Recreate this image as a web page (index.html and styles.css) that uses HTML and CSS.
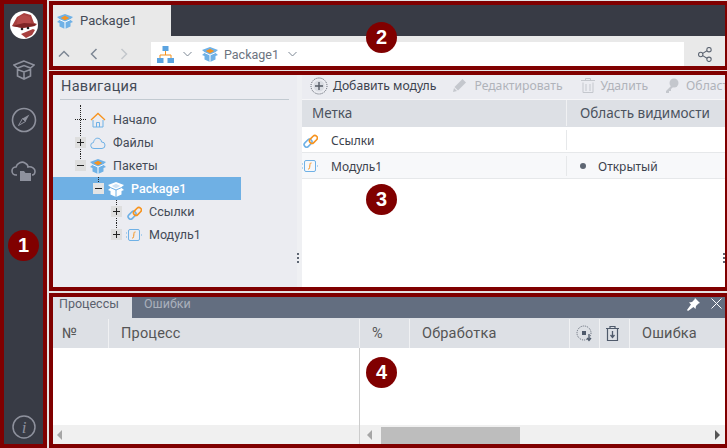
FILE: index.html

```html
<!DOCTYPE html>
<html lang="ru">
<head>
  <meta charset="UTF-8">
  <title>Package1</title>
  <link rel="stylesheet" href="styles.css">
</head>
<body>

  <svg class="defs" width="0" height="0">
    <symbol id="pkg" viewBox="0 0 16 16">
      <path d="M8 1 0 4l3 2.500L0 9l2.500 1v3.500L8 16l5.500-2.500V10L16 9l-3-2.500L16 4z" fill="#6fb1e6"/>
      <path d="M8 2.800 3.800 5 8 7.200 12.200 5z" fill="#f7931e"/>
      <path d="M8 9 2.500 6.600M8 9l5.500-2.400M8 9v7" stroke="#fff" fill="none"/>
    </symbol>
    <symbol id="pkgw" viewBox="0 0 16 16">
      <path d="M8 1 0 4l3 2.500L0 9l2.500 1v3.500L8 16l5.500-2.500V10L16 9l-3-2.500L16 4z" fill="#fff"/>
      <path d="M8 2.800 3.800 5 8 7.200 12.200 5z" fill="#cfe3f5"/>
      <path d="M8 9 2.500 6.600M8 9l5.500-2.400M8 9v7" stroke="#6fb1e6" fill="none"/>
    </symbol>
    <symbol id="lnk" viewBox="0 0 16 16">
      <rect x="-6.500" y="5.500" width="9" height="5" rx="2.500" transform="rotate(-45 5 8) translate(5.500 3)" fill="none" stroke="#6fb1e6" stroke-width="1.600"/>
      <rect x="5.500" y="5.500" width="9" height="5" rx="2.500" transform="rotate(-45 10 6)" fill="none" stroke="#f7931e" stroke-width="1.600"/>
    </symbol>
    <symbol id="mod" viewBox="0 0 16 16">
      <rect x="2.500" y="2.500" width="11" height="11" rx="1.500" fill="none" stroke="#6fb1e6"/>
      <path d="M9.500 5c-1.500-.5-1.500 1-1.700 3s-.3 3.500-1.800 3" fill="none" stroke="#f7931e"/>
      <path d="M0 6h1M0 10h1M15 8h1" stroke="#6fb1e6"/>
    </symbol>
  </svg>

  <!-- 1 -->
  <aside class="frame sidebar">
    <svg class="avatar" width="28" height="28" viewBox="0 0 28 28">
      <circle cx="14" cy="14" r="14" fill="#fff"/>
      <path d="M2 15 7 6l7-4 7 2 3 8 3 1-2 2-12 2z" fill="#a8403f"/>
      <path d="M8 6l6-2 6 2 1 6-14 1z" fill="#b54a49"/>
      <path d="M2 15l12-3 12 1-2 2-12 2z" fill="#7e2525"/>
      <path d="M11 23l12-5 2 1-3 5-6 3z" fill="#a8403f"/>
      <circle cx="12" cy="18" r="1.300" fill="#222"/>
      <circle cx="18" cy="17" r="1.300" fill="#222"/>
    </svg>
    <svg class="side-icon" width="22" height="22" viewBox="0 0 22 22" fill="none" stroke="#8e919d" stroke-width="1.600">
      <path d="M11 2 1 6l3.500 3L11 6.500 17.500 9 21 6z"/>
      <path d="M4.500 10v7l6.500 3 6.500-3v-7M4.500 10.500 11 13l6.500-2.500M11 13v7"/>
    </svg>
    <svg class="side-icon" width="26" height="26" viewBox="0 0 26 26" fill="none" stroke="#8e919d" stroke-width="1.600">
      <circle cx="13" cy="13" r="11.500"/>
      <path d="M18.500 7.500 14.500 14.500 11.500 11.500z" fill="#8e919d" stroke="none"/>
      <path d="M7.500 18.500 11.500 11.500 14.500 14.500z" stroke-width="1"/>
    </svg>
    <svg class="side-icon" width="26" height="24" viewBox="0 0 26 22" fill="none" stroke="#8e919d" stroke-width="1.600">
      <path d="M6 15H5a4 4 0 0 1 0-8c1-4 6-6 9-4 2 1 3 2 3 4 4-1 7 2 7 4s-1 4-3 4"/>
      <path d="M9 11h4l1.500 2H20v8H9z" fill="#8e919d" stroke="none"/>
    </svg>
    <svg class="side-info" width="24" height="24" viewBox="0 0 24 24">
      <circle cx="12" cy="12" r="11" fill="none" stroke="#8e919d" stroke-width="1.500"/>
      <text x="12" y="17.500" text-anchor="middle" class="info-i">i</text>
    </svg>
  </aside>

  <div class="main">

    <!-- 2 -->
    <header class="frame top">
      <div class="tabbar">
        <div class="doc-tab">
          <svg width="16" height="16"><use href="#pkg"/></svg>
          <span>Package1</span>
        </div>
      </div>
      <div class="navbar">
        <div class="nav-btns">
          <svg width="12" height="12" viewBox="0 0 12 12" fill="none" stroke="#7d8794" stroke-width="1.500"><path d="M1 8.500 6 3.500l5 5"/></svg>
          <svg width="12" height="12" viewBox="0 0 12 12" fill="none" stroke="#7d8794" stroke-width="1.500"><path d="M8.500 1 3.500 6l5 5"/></svg>
          <svg width="12" height="12" viewBox="0 0 12 12" fill="none" stroke="#c3c7cc" stroke-width="1.500"><path d="M3.500 1l5 5-5 5"/></svg>
        </div>
        <div class="crumbs">
          <svg width="17" height="17" viewBox="0 0 17 17">
            <rect x="5.500" y="0" width="6" height="5" fill="#5ba3e0"/>
            <rect x="0" y="12" width="6.500" height="5" fill="#5ba3e0"/>
            <rect x="10.500" y="12" width="6.500" height="5" fill="#5ba3e0"/>
            <path d="M8.500 5v4M3 12V9h11v3" fill="none" stroke="#f7931e"/>
          </svg>
          <svg class="chev" width="9" height="6" viewBox="0 0 9 6" fill="none" stroke="#7d8794"><path d="M.5 1l4 4 4-4"/></svg>
          <svg class="crumb-pkg" width="16" height="16"><use href="#pkg"/></svg>
          <span class="crumb-text">Package1</span>
          <svg class="chev" width="9" height="6" viewBox="0 0 9 6" fill="none" stroke="#7d8794"><path d="M.5 1l4 4 4-4"/></svg>
        </div>
        <div class="share">
          <svg width="14" height="15" viewBox="0 0 14 15" fill="none" stroke="#5e6673" stroke-width="1.100">
            <circle cx="2.700" cy="7.500" r="2.200"/><circle cx="11" cy="2.700" r="2.200"/><circle cx="11" cy="12.300" r="2.200"/>
            <path d="M4.700 6.400 9 3.800M4.700 8.600 9 11.200"/>
          </svg>
        </div>
      </div>
    </header>

    <!-- 3 -->
    <section class="frame middle">
      <div class="navpane">
        <h3 class="nav-title">Навигация</h3>
        <div class="tree">
          <div class="node lvl0 line-up-first">
            <span class="exp none"></span>
            <svg class="ticon" width="16" height="16" viewBox="0 0 16 16" fill="none">
              <path d="M1 8l7-6.500L15 8" stroke="#f7931e" stroke-width="1.300"/>
              <path d="M3 8v7h10V8M6.500 15v-4.500h3V15" stroke="#6fb1e6"/>
            </svg>
            <span>Начало</span>
          </div>
          <div class="node lvl0">
            <span class="exp plus"></span>
            <svg class="ticon" width="16" height="16" viewBox="0 0 16 16" fill="none" stroke="#6fb1e6">
              <path d="M4 13.500a3 3 0 0 1-.5-6C4 4 6.500 2.500 9 3.500c1.500.5 2.500 2 2.500 3.500a3.200 3.200 0 0 1 .5 6.500z"/>
            </svg>
            <span>Файлы</span>
          </div>
          <div class="node lvl0 last">
            <span class="exp"></span>
            <svg class="ticon" width="16" height="16"><use href="#pkg"/></svg>
            <span>Пакеты</span>
          </div>
          <div class="node lvl1 selected">
            <span class="exp"></span>
            <svg class="ticon" width="16" height="16"><use href="#pkgw"/></svg>
            <span class="sel-text">Package1</span>
          </div>
          <div class="node lvl2">
            <span class="exp plus"></span>
            <svg class="ticon" width="16" height="16"><use href="#lnk"/></svg>
            <span>Ссылки</span>
          </div>
          <div class="node lvl2 last">
            <span class="exp plus"></span>
            <svg class="ticon" width="16" height="16"><use href="#mod"/></svg>
            <span>Модуль1</span>
          </div>
        </div>
      </div>
      <div class="splitter"><i></i></div>
      <div class="content">
        <div class="toolbar">
          <svg class="tool-add" width="18" height="18" viewBox="0 0 18 18" fill="none">
            <circle cx="9" cy="9" r="8" stroke="#555b66" stroke-dasharray="1 1"/>
            <circle cx="9" cy="9" r="5.500" fill="#d9dce2"/>
            <path d="M9 5v8M5 9h8" stroke="#555b66" stroke-width="1.400"/>
          </svg>
          <span class="tool active">Добавить модуль</span>
          <svg class="tool-edit" width="15" height="15" viewBox="0 0 15 15"><path d="M10.500 1 14 4.500 6 12.500 2.500 9zM2 10l3 3-4 1z" fill="#c4c7cd"/></svg>
          <span class="tool">Редактировать</span>
          <svg class="tool-del" width="14" height="15" viewBox="0 0 14 15" fill="none" stroke="#c4c7cd"><path d="M0 2.500h14M4.500 2.500V.5h5v2M2 4.500v10h10v-10M5 6v7M9 6v7"/></svg>
          <span class="tool">Удалить</span>
          <svg class="tool-key" width="14" height="15" viewBox="0 0 14 15"><circle cx="9" cy="5" r="4.500" fill="#c4c7cd"/><path d="M7 7 1 13v2h3v-2h2v-2l3-3z" fill="#c4c7cd"/></svg>
          <span class="tool">Область</span>
        </div>
        <div class="grid-head">
          <div class="cell c-label">Метка</div>
          <div class="cell c-scope">Область видимости</div>
        </div>
        <div class="row">
          <svg class="row-icon" width="16" height="16"><use href="#lnk"/></svg>
          <div class="cell c-label">Ссылки</div>
          <div class="cell c-scope"></div>
        </div>
        <div class="row alt">
          <svg class="row-icon" width="16" height="16"><use href="#mod"/></svg>
          <div class="cell c-label">Модуль1</div>
          <div class="cell c-scope"><span class="dot"></span>Открытый</div>
        </div>
        <div class="splitter-r"></div>
      </div>
    </section>

    <!-- 4 -->
    <section class="frame bottom">
      <div class="ptabs">
        <span class="ptab on">Процессы</span>
        <span class="ptab">Ошибки</span>
        <div class="ptab-tools">
          <svg width="13" height="13" viewBox="0 0 13 13" fill="#fff"><path d="M8 0l5 5-1.500.5L9 8l-.5 3-2-2L1 13 0 12l4-5.500-2-2L5 4l2.500-2.500z"/></svg>
          <svg width="11" height="11" viewBox="0 0 11 11" stroke="#fff" fill="none"><path d="M.5.5l10 10M10.500.5l-10 10"/></svg>
        </div>
      </div>
      <div class="phead">
        <div class="ph w-no">№</div>
        <div class="ph w-proc">Процесс</div>
        <div class="ph w-pct">%</div>
        <div class="ph w-work">Обработка</div>
        <div class="ph w-ico">
          <svg width="17" height="17" viewBox="0 0 17 17" fill="none">
            <circle cx="8" cy="8" r="7" stroke="#5e6673" stroke-dasharray="1 1"/>
            <rect x="6" y="6" width="4" height="4" fill="#4f5a6b"/>
            <path d="M13 9v6M11 13l2 2.500 2-2.500" stroke="#4f5a6b" stroke-width="1.300"/>
          </svg>
        </div>
        <div class="ph w-ico">
          <svg width="13" height="15" viewBox="0 0 13 15" fill="none" stroke="#4f5a6b">
            <path d="M0 2.500h13M4 2.500V.5h5v2M1.500 2.500v12h10v-12" stroke-width="1.200"/>
            <path d="M6.500 5v6M4.500 9l2 2.500 2-2.500" stroke-width="1.300"/>
          </svg>
        </div>
        <div class="ph w-err">Ошибка</div>
      </div>
      <div class="pbody">
        <div class="pcol-left"></div>
        <div class="pcol-right"></div>
      </div>
      <div class="pscroll">
        <div class="sb-left"><span class="arr-l"></span></div>
        <div class="sb-right">
          <span class="arr-l"></span>
          <div class="thumb"></div>
          <span class="arr-r"></span>
        </div>
      </div>
    </section>
  </div>

  <span class="badge b1">1</span>
  <span class="badge b2">2</span>
  <span class="badge b3">3</span>
  <span class="badge b4">4</span>

</body>
</html>
```

FILE: styles.css

```css
html, body {
  margin: 0;
  padding: 0;
}
body {
  width: 727px;
  height: 448px;
  overflow: hidden;
  background-color: #e4e4e4;
  font-family: Roboto, sans-serif;
  display: flex;
  position: relative;
}
svg {
  display: block;
  flex: none;
}
.defs {
  position: absolute;
}
.frame {
  border: 4px solid #800000;
  box-sizing: border-box;
}

/* 1 */
.sidebar {
  width: 47px;
  margin-right: 2px;
  background-color: #383b45;
  display: flex;
  flex-direction: column;
  align-items: center;
  padding-top: 7px;
}
.avatar {
  margin-bottom: 20px;
}
.side-icon {
  margin-bottom: 26px;
}
.side-info {
  margin-top: auto;
  margin-bottom: 5px;
}
.info-i {
  font-family: "Liberation Serif", serif;
  font-style: italic;
  font-size: 17px;
  fill: #8e919d;
}

.main {
  width: 678px;
  flex: none;
  display: flex;
  flex-direction: column;
  padding-top: 1px;
}

/* 2 */
.top {
  height: 69px;
  margin-right: -1px;
  margin-bottom: 1px;
  border-right-width: 3px;
  background-color: #e9e9e9;
}
.tabbar {
  height: 31px;
  background-color: #383b45;
}
.doc-tab {
  width: 118px;
  height: 31px;
  background-color: #e9e9e9;
  display: flex;
  align-items: center;
  padding-left: 4px;
  box-sizing: border-box;
  font-size: 13px;
  color: #444b57;
}
.doc-tab span {
  margin-left: 7px;
}
.navbar {
  height: 30px;
  display: flex;
}
.nav-btns {
  width: 98px;
  display: flex;
  align-items: center;
  gap: 18px;
  padding: 6px 0 0 5px;
  box-sizing: border-box;
}
.crumbs {
  flex: 1;
  margin-top: 6px;
  background-color: #fff;
  display: flex;
  align-items: center;
  padding-left: 6px;
  font-size: 12.500px;
  color: #6c7480;
}
.chev {
  margin-left: 9px;
}
.crumb-pkg {
  margin-left: 10px;
}
.crumb-text {
  margin-left: 6px;
}
.share {
  width: 41px;
  padding-top: 6px;
  display: flex;
  align-items: center;
  justify-content: center;
}

/* 3 */
.middle {
  height: 220px;
  margin-right: -1px;
  margin-bottom: 2px;
  border-right-width: 3px;
  display: flex;
  background-color: #fff;
}
.navpane {
  width: 244px;
  background-color: #ebecf1;
  padding-top: 3px;
  box-sizing: border-box;
}
.nav-title {
  margin: 0 8px 0 7px;
  padding: 0 0 4px 1px;
  height: 17px;
  font-size: 14.500px;
  line-height: 17px;
  font-weight: normal;
  letter-spacing: .3px;
  color: #444b57;
  border-bottom: 1px solid #c2cad1;
}
.tree {
  margin-top: 8px;
  width: 188px;
}
.node {
  height: 23px;
  display: flex;
  align-items: center;
  position: relative;
  font-size: 12.500px;
  color: #444b57;
}
.lvl0 { padding-left: 22px; }
.lvl1 { padding-left: 40px; }
.lvl2 { padding-left: 58px; }
.node::before {
  content: "";
  position: absolute;
  top: 0;
  bottom: 0;
  border-left: 1px dotted #222;
}
.lvl0::before { left: 27px; }
.lvl1::before { left: 45px; bottom: 18px; }
.lvl2::before { left: 63px; }
.last::before { bottom: 12px; }
.line-up-first::before { top: -3px; }
.exp {
  width: 11px;
  height: 11px;
  background: linear-gradient(#222, #222) center / 7px 1px no-repeat, #dedede;
  position: relative;
  z-index: 1;
}
.exp.plus {
  background: linear-gradient(#222, #222) center / 7px 1px no-repeat,
    linear-gradient(#222, #222) center / 1px 7px no-repeat, #dedede;
}
.exp.none {
  background: none;
  border-bottom: 1px dotted #222;
  height: 0;
}
.ticon {
  margin: 0 0 0 4px;
}
.node svg + span {
  margin-left: 7px;
}
.selected {
  background-color: #6fb0e4;
}
.selected .exp {
  background: linear-gradient(#222, #222) center / 7px 1px no-repeat, #e4e4e4;
}
.sel-text {
  color: #fff;
  font-weight: 500;
}
.splitter {
  width: 5px;
  background-color: #eff0f3;
  position: relative;
}
.splitter i {
  position: absolute;
  left: 0;
  top: 178px;
  width: 1px;
  height: 10px;
  border-left: 2px dotted #5e6673;
}
.content {
  flex: 1;
  min-width: 0;
  position: relative;
  font-family: "Noto Sans", sans-serif;
}
.toolbar {
  height: 25px;
  background-color: #ebecf1;
  border-bottom: 1px solid #f6f6f8;
  box-sizing: border-box;
  display: flex;
  align-items: center;
  white-space: nowrap;
  overflow: hidden;
  padding: 0 0 3px 8px;
  font-size: 12.200px;
  color: #b0b3ba;
}
.tool-add { margin-right: 5px; }
.tool-edit { margin-left: 16px; margin-right: 7px; }
.tool-del { margin-left: 18px; margin-right: 6px; }
.tool-key { margin-left: 17px; margin-right: 7px; }
.tool.active {
  color: #3c424d;
}
.grid-head {
  height: 27px;
  background-color: #dde0e5;
  display: flex;
  font-size: 13.500px;
  color: #4b525e;
  padding-bottom: 1px;
  box-sizing: border-box;
}
.cell {
  display: flex;
  align-items: center;
  box-sizing: border-box;
}
.c-label {
  width: 264px;
  flex: none;
  padding-left: 10px;
}
.c-scope {
  flex: 1;
  padding-left: 13px;
  position: relative;
}
.grid-head .c-scope {
  border-left: 1px solid #f0f1f3;
}
.row {
  height: 26px;
  display: flex;
  box-sizing: border-box;
  border-bottom: 1px solid #e6e8ea;
  font-size: 12px;
  color: #3c424d;
  position: relative;
  padding-top: 1px;
}
.row .c-label {
  padding-left: 29px;
}
.row .c-scope {
  margin: 2px 0;
  border-left: 1px solid #e6e8ea;
  padding-left: 13px;
}
.row.alt {
  background-color: #f7f8fa;
}
.row-icon {
  position: absolute;
  left: 0;
  top: 5px;
}
.dot {
  width: 6px;
  height: 6px;
  border-radius: 50%;
  background-color: #5e6673;
  margin-right: 12px;
}
.splitter-r {
  position: absolute;
  right: 0;
  top: 178px;
  height: 10px;
  border-left: 2px dotted #5e6673;
}

/* 4 */
.bottom {
  flex: 1;
  margin-right: -1px;
  border-right-width: 3px;
  background-color: #fff;
  display: flex;
  flex-direction: column;
  min-height: 0;
}
.ptabs {
  height: 21px;
  background-color: #636e80;
  display: flex;
  font-size: 12.500px;
  color: #a9b0bc;
}
.ptab {
  padding-left: 12px;
  width: 65px;
  line-height: 13px;
}
.ptab.on {
  background-color: #dde0e5;
  color: #5a616d;
  padding-left: 6px;
  width: 73px;
}
.ptab-tools {
  margin-left: auto;
  display: flex;
  gap: 11px;
  padding: 1px 3px 0 0;
}
.phead {
  height: 30px;
  flex: none;
  background-color: #dde0e5;
  display: flex;
  font-size: 14.500px;
  letter-spacing: .2px;
  color: #555;
  padding: 1px 0 0;
  box-sizing: border-box;
}
.ph {
  box-sizing: border-box;
  border-right: 1px solid #f0f1f3;
  padding-left: 12px;
  display: flex;
  align-items: center;
}
.w-no { width: 56px; padding-left: 9px; }
.w-proc { width: 251px; }
.w-pct { width: 50px; padding-left: 12px; }
.w-work { width: 160px; }
.w-ico { width: 30px; padding-left: 6px; }
.w-err { flex: 1; border: none; }
.pbody {
  flex: 1;
  display: flex;
}
.pcol-left {
  width: 306px;
  border-right: 1px solid #ccc;
}
.pscroll {
  height: 19px;
  flex: none;
  background-color: #f0f0f0;
  display: flex;
}
.sb-left {
  width: 302px;
  border-right: 1px solid #ccc;
  display: flex;
  align-items: center;
  padding-left: 4px;
}
.sb-right {
  flex: 1;
  display: flex;
  align-items: center;
  padding: 0 5px 0 7px;
}
.arr-l {
  border: 5px solid transparent;
  border-left-width: 0;
  border-right-color: #a6a6a6;
}
.arr-r {
  border: 5px solid transparent;
  border-right-width: 0;
  border-left-color: #555;
  margin-left: auto;
}
.thumb {
  width: 139px;
  height: 17px;
  margin: 2px 0 0 9px;
  background-color: #bdbdbd;
}

.badge {
  position: absolute;
  width: 31px;
  height: 31px;
  border-radius: 50%;
  background-color: #800000;
  color: #fff;
  font-family: "Liberation Sans", sans-serif;
  font-weight: bold;
  font-size: 20px;
  line-height: 31px;
  text-align: center;
}
.b1 { left: 8px; top: 230px; }
.b2 { left: 366px; top: 22px; }
.b3 { left: 366px; top: 184px; }
.b4 { left: 366px; top: 357px; }
```
